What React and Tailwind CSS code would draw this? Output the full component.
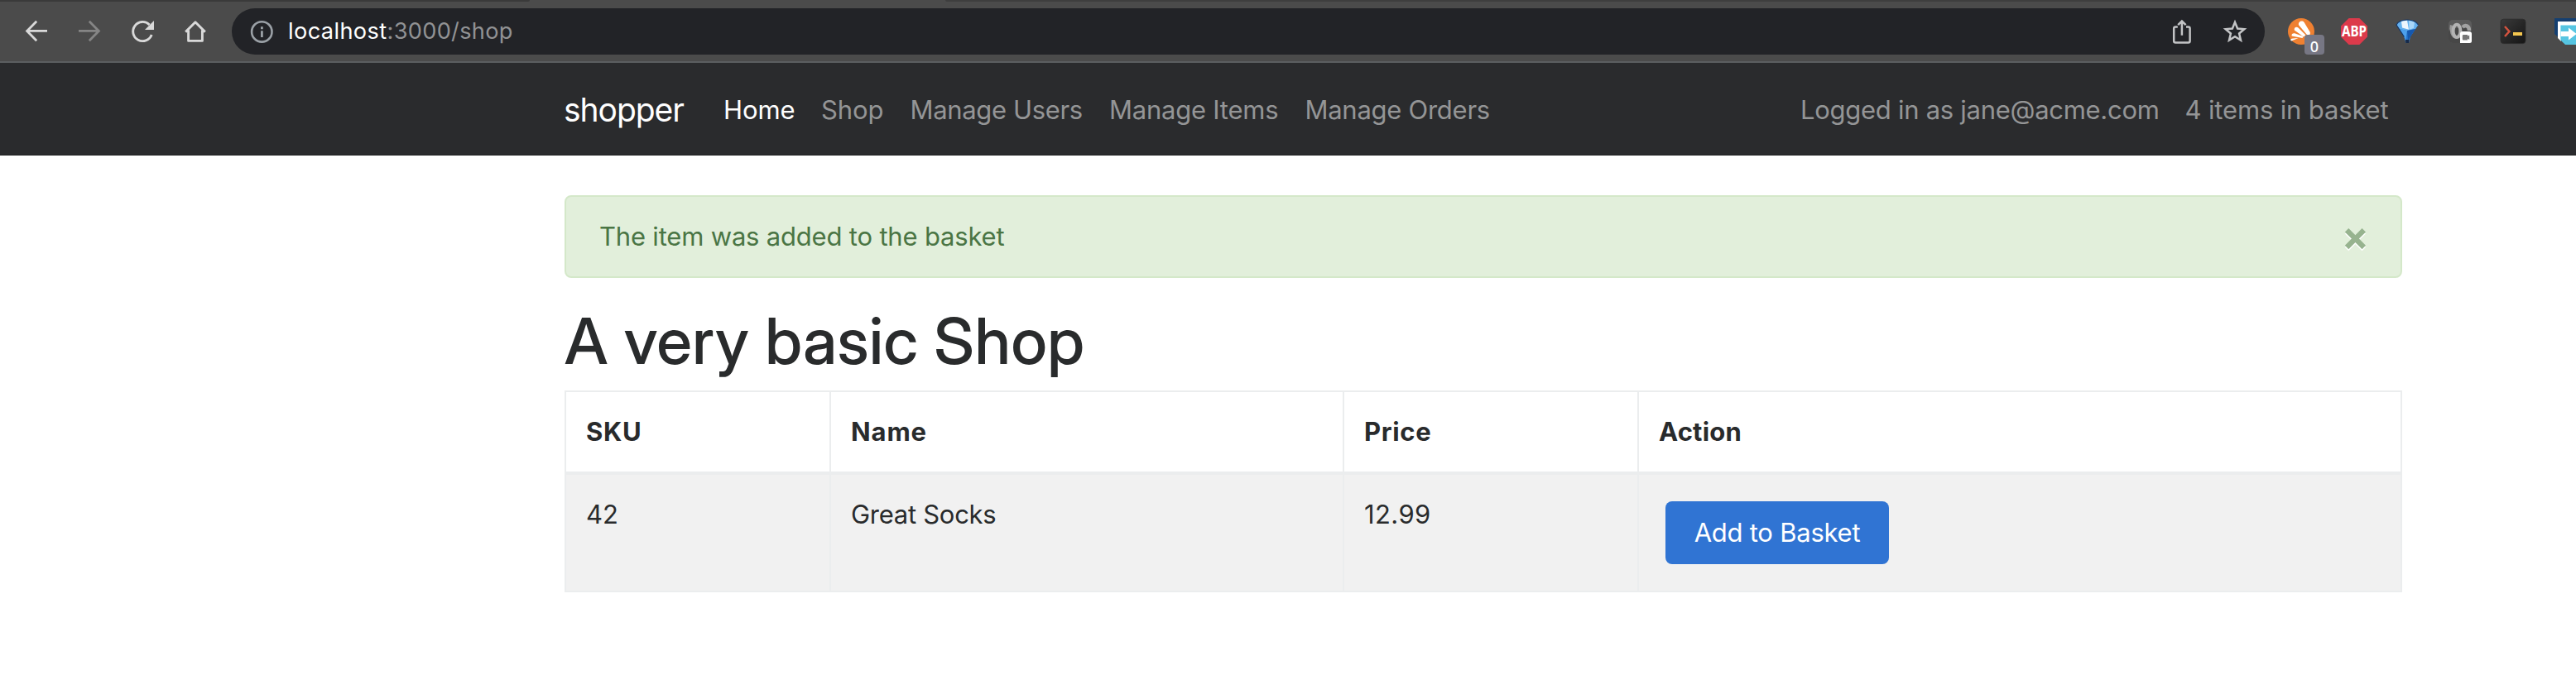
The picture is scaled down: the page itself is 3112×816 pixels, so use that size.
function Icon({ children }) {
  return (
    <svg width="32" height="32" viewBox="0 0 32 32" fill="none" className="shrink-0 overflow-visible">
      {children}
    </svg>
  );
}

function BackIcon() {
  return (
    <Icon>
      <path d="M29 15.4H4.5M16.2 3.8 4.6 15.4 16.2 27.2" stroke="#d9d9d9" strokeWidth="2.8" />
    </Icon>
  );
}

function ForwardIcon() {
  return (
    <Icon>
      <path d="M3 15.4H27.5M15.8 3.8 27.4 15.4 15.8 27.2" stroke="#858585" strokeWidth="2.8" />
    </Icon>
  );
}

function ReloadIcon() {
  return (
    <Icon>
      <path d="M24.6 7.9A11.6 11.6 0 1 0 27.2 20" stroke="#d9d9d9" strokeWidth="2.9" />
      <path d="M30 3v11H19z" fill="#d9d9d9" />
    </Icon>
  );
}

function HomeIcon() {
  return (
    <Icon>
      <path d="M4.2 16.6 16 4.8 27.8 16.6M7.6 14.5V27.4H24.4V14.5" stroke="#d9d9d9" strokeWidth="2.9" strokeLinejoin="round" />
    </Icon>
  );
}

function InfoIcon() {
  return (
    <Icon>
      <circle cx="16.3" cy="16.4" r="12.2" stroke="#9aa0a6" strokeWidth="2.6" />
      <path d="M15 10.3h2.8v3H15zM15 15.2h2.8v7.8H15z" fill="#9aa0a6" />
    </Icon>
  );
}

function ShareIcon() {
  return (
    <Icon>
      <path
        d="M10.8 10.6H8.2a2 2 0 0 0-2 2V27.4a2 2 0 0 0 2 2H23.6a2 2 0 0 0 2-2V12.6a2 2 0 0 0-2-2H21"
        stroke="#c3c4c6"
        strokeWidth="2.5"
      />
      <path d="M15.9 20.8V4.4M11.2 8.2 15.9 3.5 20.6 8.2" stroke="#c3c4c6" strokeWidth="2.5" />
    </Icon>
  );
}

function StarIcon() {
  return (
    <Icon>
      <path
        d="M16 4.9 19.1 12.5 27.3 13.2 21.1 18.5 23 26.6 16 22.3 9 26.6 10.9 18.5 4.7 13.2 12.9 12.5z"
        stroke="#c3c4c6"
        strokeWidth="2.5"
      />
    </Icon>
  );
}

function AvastIcon() {
  return (
    <div className="relative size-8 shrink-0">
      <Icon>
        <circle cx="16" cy="16" r="16" fill="#ef8031" />
        <g fill="#fff">
          <path d="M13 8.2C12 4.5 17 1.8 19.6 5L26.5 16.5C28 20 24.5 22 22.5 19.5z" />
          <path d="M7.8 14.5C7 11.5 10 9.8 12.4 11.6L21.5 20.5 19 22.5z" />
          <path d="M4.6 21.4C4 18.8 6.5 17.6 8.8 18.4L18.5 22 17.5 24z" />
          <path d="M3.2 26.8C3 25.4 4.4 24.6 6 24.6L12.5 24 4.2 27.4z" />
        </g>
      </Icon>
      <span className="absolute top-5 left-5 flex h-6 w-6 items-center justify-center rounded bg-[#777784] pt-[3px] font-['Noto_Sans'] text-[18px] leading-none font-medium text-white">
        0
      </span>
    </div>
  );
}

function AbpIcon() {
  return (
    <Icon>
      <path d="M9.6 0H22.4L32 9.6V22.4L22.4 32H9.6L0 22.4V9.6z" fill="#dc3a4b" />
      <text
        x="1"
        y="22.4"
        fill="#fff"
        fontFamily="Noto Sans, sans-serif"
        fontWeight="700"
        fontSize="17"
        textLength="30"
        lengthAdjust="spacingAndGlyphs"
      >
        ABP
      </text>
    </Icon>
  );
}

function GemIcon() {
  return (
    <Icon>
      <path d="M3 8C5 4 9 2 16 2s11 2 13.4 6L20 22.5 18 30h-3.6L12.4 22.5z" fill="#2878cf" />
      <path d="M3 8C5 4 9 2 16 2s11 2 13.4 6L26 13 16 15 6.4 13z" fill="#64b0ee" />
      <path d="M9 4 16 2.6 18 13.8 10 11.5z" fill="#eef6fd" />
      <path d="M18 3 25 4.6 24 12 18.5 13.8z" fill="#a8d6f8" />
      <path d="M6.4 13 16 15 14 27 12.4 22.5z" fill="#4da0ec" />
      <path d="M26 13 16 15 17 27 20 22.5z" fill="#1658ae" />
      <path d="M3 8C5 4 9 2 16 2s11 2 13.4 6" stroke="#14315f" strokeWidth="1.1" />
      <path d="M3 8 12.4 22.5" stroke="#14315f" strokeWidth="1.1" />
      <path d="M14 26h4.4L18 30h-3.6z" fill="#172a48" />
    </Icon>
  );
}

function MaskIcon() {
  return (
    <Icon>
      <rect x="2" y="2" width="28" height="28" rx="5" fill="#5b5b5b" />
      <rect x="2" y="12" width="28" height="18" rx="5" fill="#474747" />
      <path d="M19 11C22 7.5 27 9 27 15" stroke="#a2a2a2" strokeWidth="4.5" />
      <path d="M5.6 8.5C4 15 7 23 11 23" stroke="#9a9a9a" strokeWidth="3.6" />
      <ellipse cx="12" cy="15.4" rx="4.4" ry="7.6" stroke="#b3b3b3" strokeWidth="4" />
      <path d="M19 16H27a3 3 0 0 1 3 3V27.5a2.5 2.5 0 0 1-2.5 2.5H16V19a3 3 0 0 1 3-3z" fill="#fff" />
      <path d="M20 20h5v1.6L27.2 20.4V26L25 24.8V26.4H20a1.2 1.2 0 0 1-1.2-1.2V21.2A1.2 1.2 0 0 1 20 20z" fill="#777" />
    </Icon>
  );
}

function TerminalIcon() {
  return (
    <Icon>
      <defs>
        <linearGradient id="terminal" x1="0" y1="0" x2="1" y2="1">
          <stop offset="0" stopColor="#3a3a3a" />
          <stop offset="1" stopColor="#151515" />
        </linearGradient>
      </defs>
      <rect x="1" y="1.2" width="30" height="29.4" rx="3.5" fill="url(#terminal)" stroke="#2b2b2b" strokeWidth="0.8" />
      <path d="M6 10 11.4 16 6 22" stroke="#d4533f" strokeWidth="2.5" />
      <rect x="16" y="17" width="11" height="4" fill="#f4c64f" />
    </Icon>
  );
}

function TagIcon() {
  return (
    <Icon>
      <path d="M2 0H32V8H8V24L2 19z" fill="#153f70" />
      <path d="M6 4H32V10H10V28L6 24z" fill="#fff" />
      <path d="M9.4 8.5H32V32H15L9.4 26.5z" fill="#56c5e2" />
      <path d="M9.6 16H19V11.5L28.5 19 19 26.5V22H9.6z" fill="#fff" />
    </Icon>
  );
}

function BrowserBar() {
  return (
    <header className="flex h-[76px] flex-col border-b-2 border-[#5b5e60] bg-[#4b4b4b]">
      <div className="flex h-0.5 justify-between">
        <div className="w-[640px] rounded-br bg-[#3a3a3a]" />
        <div className="w-[1970px] rounded-bl bg-[#3e3e3e]" />
      </div>
      <div className="flex h-[72px] items-center overflow-hidden pl-7">
        <div className="flex gap-8">
          <BackIcon />
          <ForwardIcon />
          <ReloadIcon />
          <HomeIcon />
        </div>
        <div className="ml-7 flex h-14 w-[2456px] shrink-0 items-center rounded-full bg-[#222327] pl-5">
          <InfoIcon />
          <div className="ml-4 flex text-[27.2px] leading-none">
            <span className="tracking-[0.37px] text-white">localhost</span>
            <span className="tracking-[0.3px] text-[#919294]">:3000/shop</span>
          </div>
          <div className="mr-5 ml-auto flex gap-8">
            <ShareIcon />
            <StarIcon />
          </div>
        </div>
        <div className="ml-7 flex gap-8">
          <AvastIcon />
          <AbpIcon />
          <GemIcon />
          <MaskIcon />
          <TerminalIcon />
          <TagIcon />
        </div>
      </div>
    </header>
  );
}

function NavBar() {
  return (
    <nav className="flex h-28 items-center border-b border-[#1f2021] bg-[#2a2b2d] pt-[3px] pl-[681px] text-[31px] whitespace-nowrap text-[#949596]">
      <a className="w-[193px] text-[39px] tracking-[-1.05px] text-white">shopper</a>
      <a className="w-[118px] tracking-[-0.06px] text-white">Home</a>
      <a className="w-[107.5px] tracking-[-0.08px]">Shop</a>
      <a className="w-[240.5px] tracking-[-0.35px]">Manage Users</a>
      <a className="w-[236.5px] tracking-[-0.24px]">Manage Items</a>
      <a className="w-[598.5px] tracking-[-0.27px]">Manage Orders</a>
      <a className="w-[464.5px] tracking-[-0.28px]">Logged in as jane@acme.com</a>
      <a className="tracking-[-0.15px]">4 items in basket</a>
    </nav>
  );
}

function Alert() {
  return (
    <div className="flex h-[100px] items-center justify-between rounded-lg border-2 border-[#d4e8c9] bg-[#e2efdb] pt-px pr-[38px] pl-10 text-[31px] text-[#4a7544]">
      <span className="tracking-[-0.19px]">The item was added to the basket</span>
      <button className="mb-[3px] text-[49px] leading-none font-bold text-[#97b38f] [text-shadow:0_2px_0_#fff]">×</button>
    </div>
  );
}

function ShopTable() {
  return (
    <table className="w-[2220px] table-fixed border-collapse text-left text-[31px] leading-[48px]">
      <colgroup>
        <col className="w-[320px]" />
        <col className="w-[620px]" />
        <col className="w-[356px]" />
        <col />
      </colgroup>
      <thead>
        <tr className="h-[99px] font-bold">
          <th className="border-2 border-b-4 border-[#ebedee] px-6 font-bold tracking-[0.75px]">SKU</th>
          <th className="border-2 border-b-4 border-[#ebedee] px-6 font-bold tracking-[0.9px]">Name</th>
          <th className="border-2 border-b-4 border-[#ebedee] px-6 font-bold tracking-[0.65px]">Price</th>
          <th className="border-2 border-b-4 border-[#ebedee] px-6 font-bold tracking-[0.22px]">Action</th>
        </tr>
      </thead>
      <tbody>
        <tr className="h-[143px] bg-[#f1f1f1] align-top">
          <td className="border-2 border-[#ebedee] px-6 pt-6">42</td>
          <td className="border-2 border-[#ebedee] px-6 pt-6 tracking-[-0.28px]">Great Socks</td>
          <td className="border-2 border-[#ebedee] px-6 pt-6 tracking-[0.4px]">12.99</td>
          <td className="border-2 border-[#ebedee] px-8 pt-8">
            <button className="flex h-[76px] w-[270px] items-center justify-center rounded-lg bg-[#3074d3] tracking-[-0.24px] whitespace-nowrap text-white">
              Add to Basket
            </button>
          </td>
        </tr>
      </tbody>
    </table>
  );
}

export default function App() {
  return (
    <div className="h-[816px] w-[3112px] overflow-hidden bg-white font-['Inter',sans-serif] text-[#292b2c]">
      <BrowserBar />
      <NavBar />
      <main className="ml-[682px] w-[2220px] pt-12">
        <Alert />
        <h1 className="pt-[22px] pb-[5px] font-['Inter_Display','Inter',sans-serif] text-[77.6px] leading-[109px] font-medium tracking-[0.5px]">
          A very basic Shop
        </h1>
        <ShopTable />
      </main>
    </div>
  );
}
